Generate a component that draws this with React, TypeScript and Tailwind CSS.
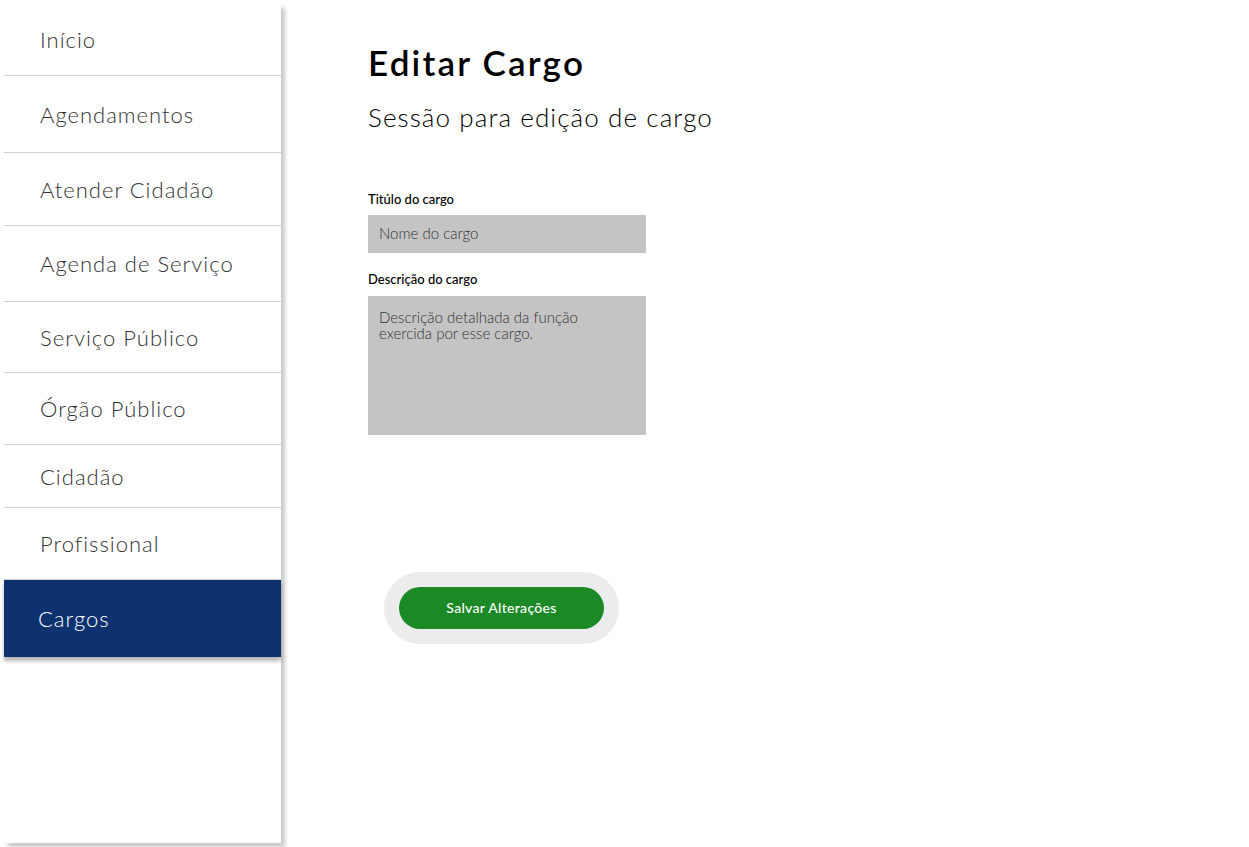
const menu = [
  { label: "Início", h: "h-[72px]" },
  { label: "Agendamentos", h: "h-[77px]" },
  { label: "Atender Cidadão", h: "h-[73px]" },
  { label: "Agenda de Serviço", h: "h-[76px]" },
  { label: "Serviço Público", h: "h-[71px]" },
  { label: "Órgão Público", h: "h-[72px]" },
  { label: "Cidadão", h: "h-[63px]" },
  { label: "Profissional", h: "h-[72px]" },
];

function Sidebar() {
  return (
    <aside className="ml-1 mt-1 flex h-[839px] w-[277px] shrink-0 flex-col bg-white shadow-[4px_4px_4px_rgba(0,0,0,0.22)]">
      {menu.map((item) => (
        <div
          key={item.label}
          className={`flex ${item.h} items-center border-b border-[#cfcfcf] pl-9 text-[22px] font-light tracking-[1px] text-[#333]`}
        >
          {item.label}
        </div>
      ))}
      <div className="flex h-[77px] items-center bg-[#0d326f] pl-[34px] text-[22px] font-light tracking-[1px] text-white shadow-[0_4px_4px_rgba(0,0,0,0.3)]">
        Cargos
      </div>
    </aside>
  );
}

export default function App() {
  return (
    <div className="flex min-h-[847px] bg-white font-['Lato',sans-serif] text-black">
      <Sidebar />
      <main className="pl-[87px] pt-[36px]">
        <h1 className="text-[35px] font-semibold tracking-[2.2px]">Editar Cargo</h1>
        <p className="mt-[9px] text-[26px] font-light tracking-[1.1px]">Sessão para edição de cargo</p>

        <div className="mt-[53px] flex flex-col">
          <label className="text-[13px] font-medium">Titúlo do cargo</label>
          <div className="mt-[6px] h-[38px] w-[278px] bg-[#c4c4c4] px-[11px] pt-[7px] text-[15px] font-light text-[#333]">
            Nome do cargo
          </div>
          <label className="mt-[17px] text-[13px] font-medium">Descrição do cargo</label>
          <div className="mt-[6px] h-[139px] w-[278px] bg-[#c4c4c4] pl-[11px] pr-[40px] pt-[13px] text-[15px] leading-[16px] font-light text-[#333]">
            Descrição detalhada da função exercida por esse cargo.
          </div>
        </div>

        <div className="ml-4 mt-[137px] flex h-[72px] w-[235px] items-center justify-center rounded-full bg-[#ececec]">
          <button className="h-[42px] w-[205px] rounded-full bg-[#1a8926] text-[14px] font-medium tracking-[0.3px] text-white">
            Salvar Alterações
          </button>
        </div>
      </main>
    </div>
  );
}
